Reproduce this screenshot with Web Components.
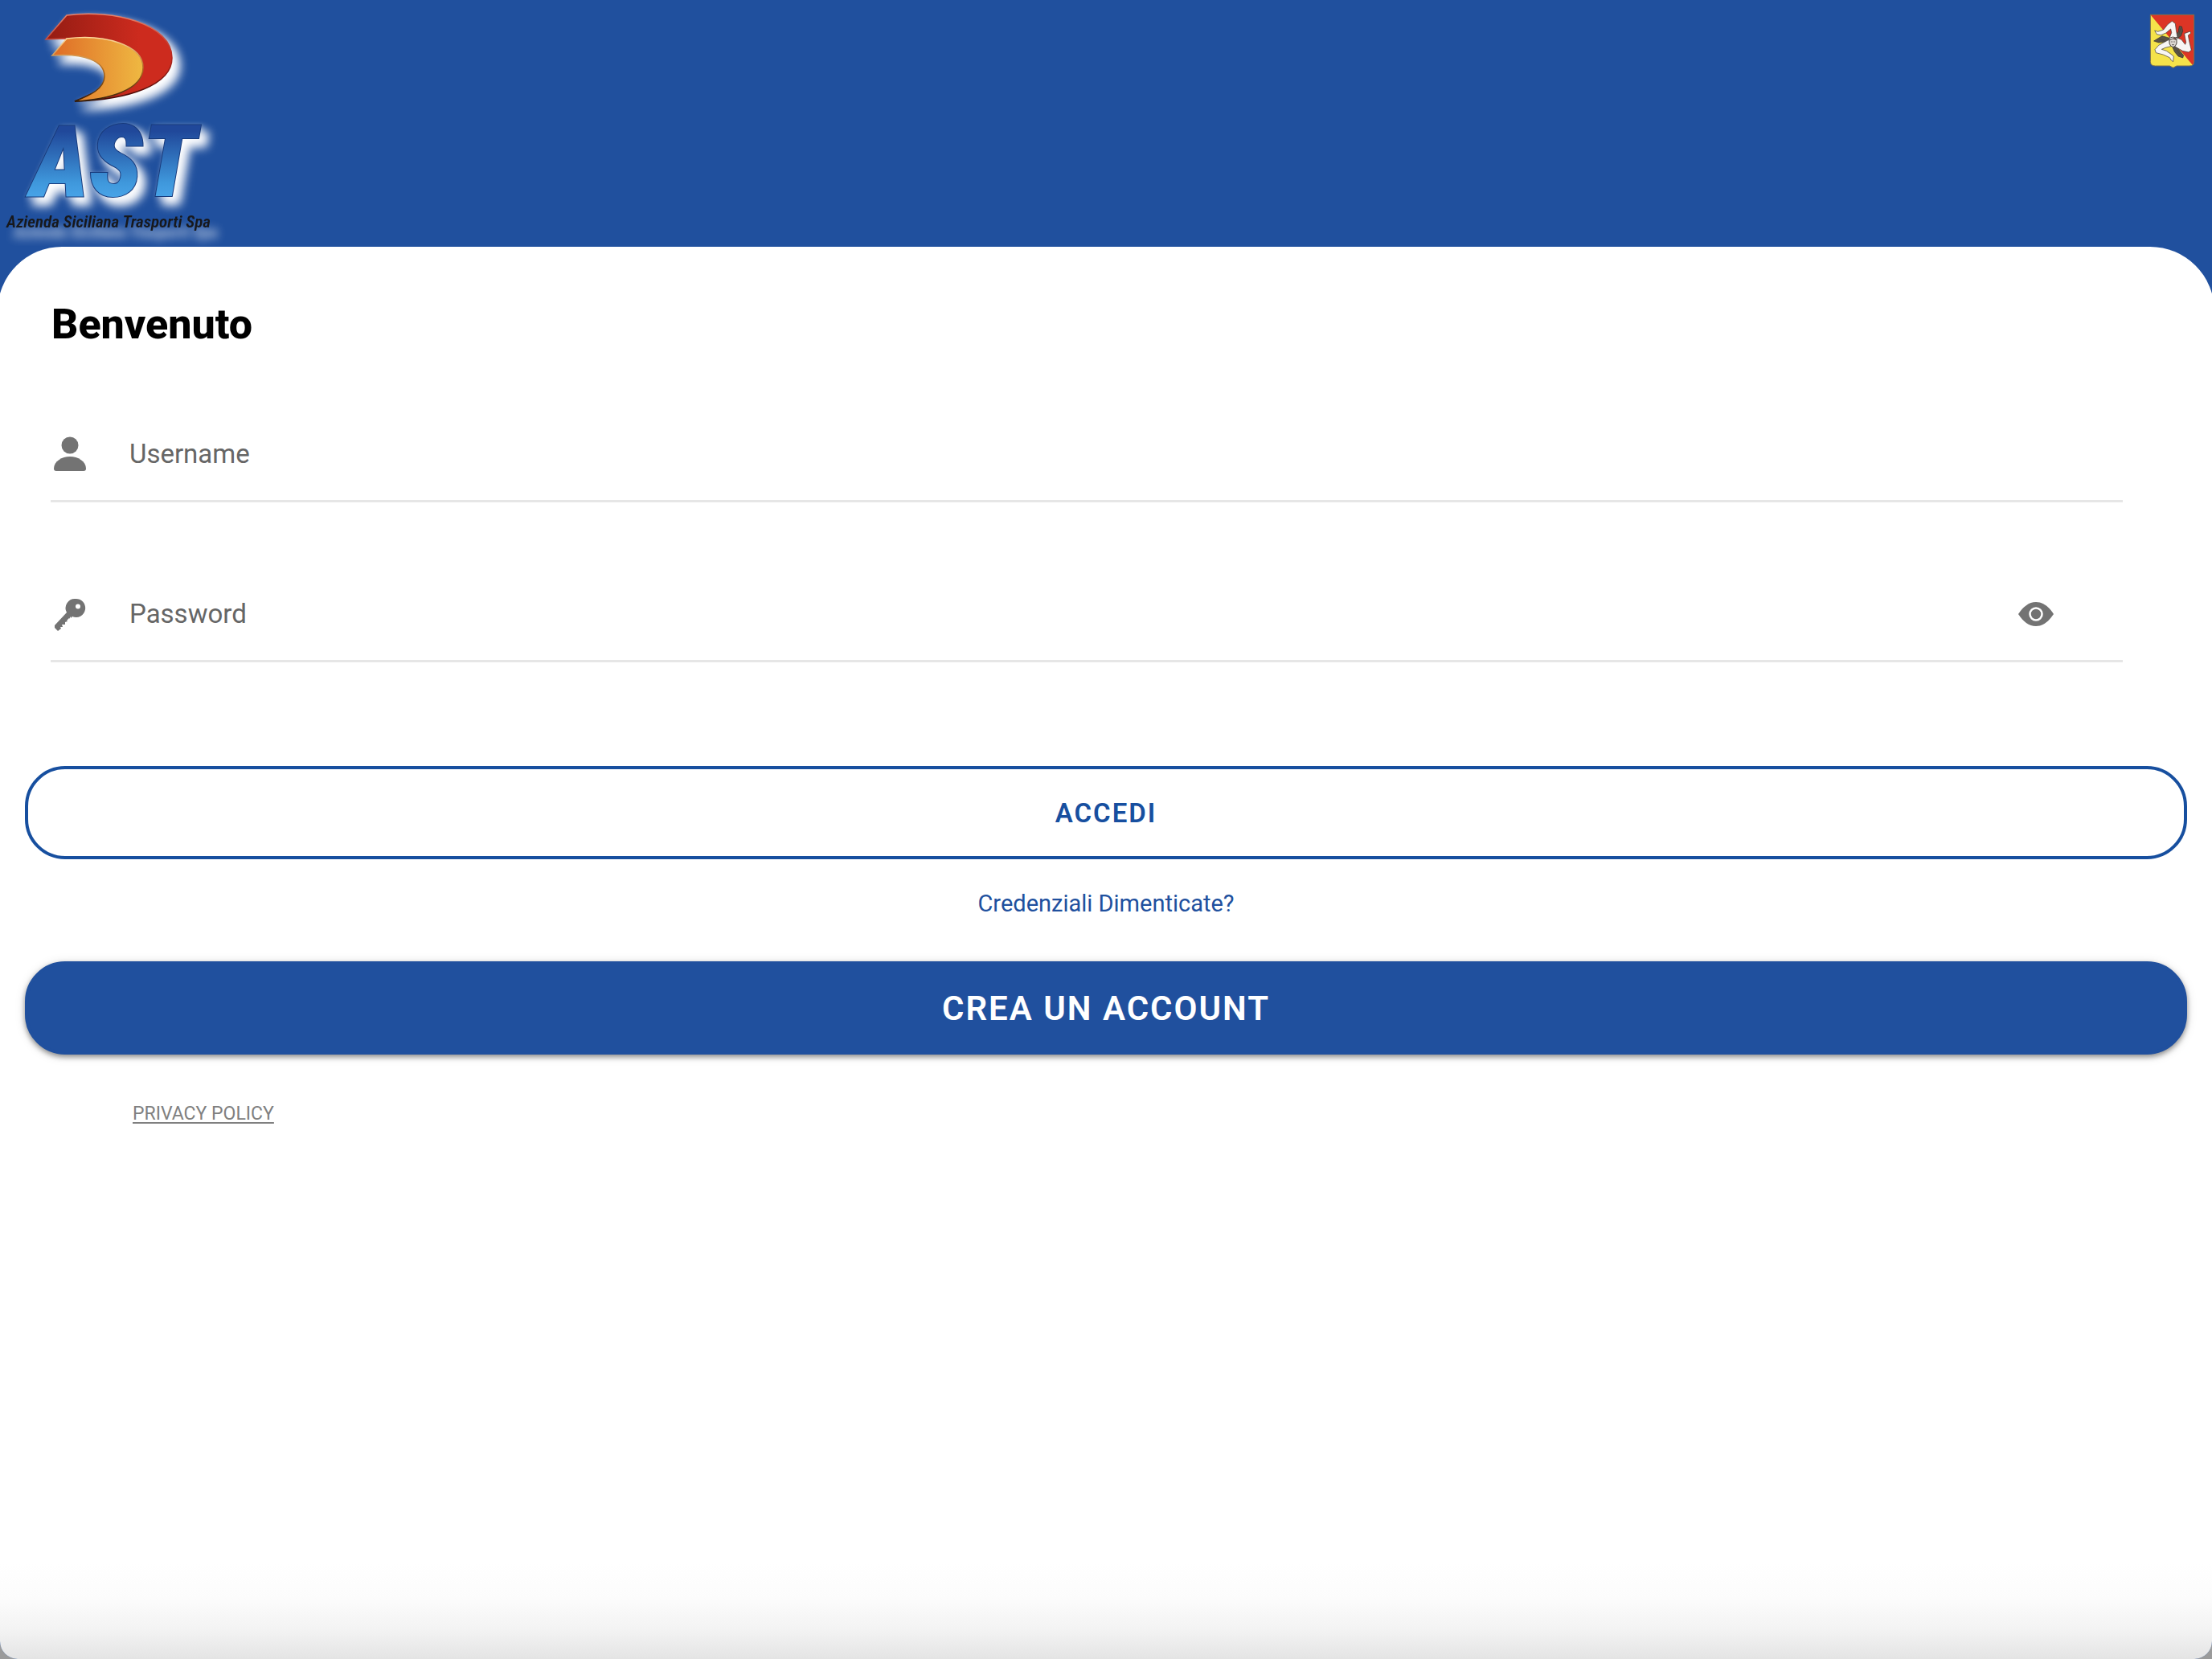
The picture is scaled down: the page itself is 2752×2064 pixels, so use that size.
<!DOCTYPE html>
<html lang="it">
<head>
<meta charset="utf-8">
<meta name="viewport" content="width=device-width, initial-scale=1">
<title>AST - Accesso</title>
<style>
  body {
    margin: 0;
    background: #9b9b9b;
    font-family: Roboto, "Liberation Sans", sans-serif;
  }
</style>
</head>
<body>
<login-page>
  <ast-logo slot="brand"></ast-logo>
  <sicily-crest slot="crest"></sicily-crest>
  <h1 slot="title">Benvenuto</h1>
  <login-field name="username" label="Username" icon="user"></login-field>
  <login-field name="password" label="Password" icon="key" type="password"></login-field>
  <pill-button slot="actions" variant="outline">ACCEDI</pill-button>
  <text-link slot="actions" href="#recupera">Credenziali Dimenticate?</text-link>
  <pill-button slot="actions" variant="solid">CREA UN ACCOUNT</pill-button>
  <text-link slot="footer" href="#privacy" variant="small">PRIVACY POLICY</text-link>
</login-page>

<script>
const ICONS = {
  user: `<svg viewBox="0 0 40 44" width="40" height="44"><circle cx="20" cy="11" r="10.5"/><path d="M0 40C0 31 10 25 20 25s20 6 20 15q0 3-3 3H3q-3 0-3-3z"/></svg>`,
  key: `<svg viewBox="0 0 40 44" width="40" height="44"><path fill-rule="evenodd" d="M27 3a11.500 11.500 0 1 1-4 22l-2 2v-2l-2 3v-1l-3 3 1 1-3 1 0 3-4 0 1 3-3 0 1 2-4 3-4-4v-3l15-16A11.500 11.500 0 0 1 27 3zm3 6.500a3 3 0 1 0 0 6 3 3 0 1 0 0-6z"/></svg>`,
  eye: `<svg viewBox="0 0 44 30" width="44" height="30"><path d="M0 15C6 6 13 0 22 0s16 6 22 15c-6 9-13 15-22 15S6 24 0 15z"/><circle cx="22" cy="15" r="7.500" fill="none" stroke="#fff" stroke-width="2.500"/></svg>`
};

class LoginPage extends HTMLElement {
  constructor() {
    super();
    this.attachShadow({ mode: "open" });
  }

  connectedCallback() {
    this.shadowRoot.innerHTML = `
      <style>
        :host {
          display: flex;
          flex-direction: column;
          min-height: 100vh;
          overflow: hidden;
          border-radius: 0 0 22px 22px;
          background: #20509e;
        }
        header {
          display: flex;
          justify-content: space-between;
          align-items: flex-start;
          height: 307px;
        }
        main {
          flex: 1;
          margin: 0 -3px;
          padding: 65px 34px 0;
          border-radius: 80px 80px 0 0;
          background: linear-gradient(to top, #e4e4e4 0, #f3f3f3 36px, #fcfcfc 76px, #fff 120px);
        }
        form {
          display: flex;
          flex-direction: column;
        }
        .fields {
          display: flex;
          flex-direction: column;
          gap: 82px;
          margin: 72px 80px 0 32px;
        }
        .actions {
          display: flex;
          flex-direction: column;
          align-items: stretch;
          gap: 31px;
          margin-top: 129px;
        }
        footer {
          padding: 50px 134px 0;
        }
        ::slotted(h1) {
          margin: 0 0 0 33px;
          font-size: 52px;
          font-weight: 800;
          line-height: 64px;
          color: #000;
        }
      </style>
      <header>
        <slot name="brand"></slot>
        <slot name="crest"></slot>
      </header>
      <main>
        <slot name="title"></slot>
        <form>
          <div class="fields"><slot></slot></div>
          <div class="actions"><slot name="actions"></slot></div>
        </form>
        <footer><slot name="footer"></slot></footer>
      </main>
    `;
  }
}

class LoginField extends HTMLElement {
  constructor() {
    super();
    this.attachShadow({ mode: "open" });
  }

  connectedCallback() {
    const name = this.getAttribute("name");
    const label = this.getAttribute("label");
    const type = this.getAttribute("type") || "text";
    const isPassword = type === "password";

    this.shadowRoot.innerHTML = `
      <style>
        :host { display: block; }
        .row {
          display: flex;
          align-items: center;
          height: 114px;
          padding-right: 86px;
          padding-left: 4px;
          border-bottom: 3px solid #e6e6e6;
        }
        svg { display: block; fill: #737373; }
        label { flex: none; }
        input {
          flex: 1;
          min-width: 0;
          margin: 0;
          padding: 0 0 0 54px;
          border: 0;
          outline: 0;
          background: none;
          font: 400 33px/48px Roboto, "Liberation Sans", sans-serif;
          color: #222;
        }
        input::placeholder { color: #666; opacity: 1; }
        button {
          flex: none;
          padding: 0;
          border: 0;
          background: none;
          cursor: pointer;
        }
      </style>
      <div class="row">
        <label for="${name}" aria-label="${label}">${ICONS[this.getAttribute("icon")]}</label>
        <input id="${name}" name="${name}" type="${type}" placeholder="${label}">
        ${isPassword ? `<button type="button" aria-label="Mostra password">${ICONS.eye}</button>` : ""}
      </div>
    `;

    if (isPassword) {
      const input = this.shadowRoot.querySelector("input");
      this.shadowRoot.querySelector("button").addEventListener("click", () => {
        input.type = input.type === "password" ? "text" : "password";
      });
    }
  }
}

class PillButton extends HTMLElement {
  constructor() {
    super();
    this.attachShadow({ mode: "open" });
  }

  connectedCallback() {
    const variant = this.getAttribute("variant") || "solid";
    this.shadowRoot.innerHTML = `
      <style>
        :host { display: block; }
        button {
          display: block;
          box-sizing: border-box;
          width: 100%;
          height: 116px;
          padding: 0;
          border: 4px solid #174f9f;
          border-radius: 50px;
          font-family: inherit;
          font-weight: 600;
          letter-spacing: 2px;
          cursor: pointer;
        }
        .outline {
          background: #fff;
          color: #174f9f;
          font-size: 33px;
        }
        .solid {
          border-color: #20509e;
          background: #20509e;
          color: #fff;
          font-size: 42px;
          box-shadow: 0 3px 6px rgba(0, 0, 0, 0.4), 0 2px 14px rgba(0, 0, 0, 0.12);
        }
      </style>
      <button type="button" class="${variant}"><slot></slot></button>
    `;
  }
}

class TextLink extends HTMLElement {
  constructor() {
    super();
    this.attachShadow({ mode: "open" });
  }

  connectedCallback() {
    const variant = this.getAttribute("variant") || "plain";
    this.shadowRoot.innerHTML = `
      <style>
        :host {
          display: block;
          padding-bottom: 12px;
          line-height: 48px;
          text-align: center;
        }
        :host([variant="small"]) { text-align: left; }
        a {
          font-size: 29px;
          color: #20509e;
          text-decoration: none;
        }
        .small {
          font-size: 23px;
          color: #808080;
          text-decoration: underline;
          text-decoration-thickness: 2px;
          text-underline-offset: 3px;
        }
      </style>
      <a class="${variant}" href="${this.getAttribute("href")}"><slot></slot></a>
    `;
  }
}

class AstLogo extends HTMLElement {
  constructor() {
    super();
    this.attachShadow({ mode: "open" });
  }

  connectedCallback() {
    this.shadowRoot.innerHTML = `
      <style>
        :host { display: block; }
        svg { display: block; }
        text { font-family: "Roboto Condensed", Roboto, "Liberation Sans", sans-serif; font-style: italic; font-weight: 600; }
        .name { font-weight: 900; paint-order: stroke; }
        .glow { filter: drop-shadow(8px 9px 6px #fff) drop-shadow(2px 2px 3px rgba(255, 255, 255, 0.4)); }
        .haze { filter: drop-shadow(9px 13px 6px rgba(255, 255, 255, 0.75)); }
      </style>
      <svg width="320" height="306" viewBox="0 0 320 306" role="img" aria-label="AST">
        <defs>
          <linearGradient id="red"><stop stop-color="#941c13"/><stop offset=".75" stop-color="#cd2b1e"/></linearGradient>
          <linearGradient id="gold"><stop stop-color="#df6b26"/><stop offset="1" stop-color="#efb942"/></linearGradient>
          <linearGradient id="sky" gradientUnits="userSpaceOnUse" x1="0" y1="154" x2="0" y2="246"><stop offset=".1" stop-color="#20489a"/><stop offset=".8" stop-color="#3f98dc"/><stop offset="1" stop-color="#48a4e8"/></linearGradient>
          <linearGradient id="rim" x1="0" y1="0" x2="0" y2="1"><stop stop-color="#e8846c"/><stop offset=".5" stop-color="#b3231b"/><stop offset="1" stop-color="#3c0906"/></linearGradient>
          <linearGradient id="goldrim" x1="0" y1="0" x2="0" y2="1"><stop stop-color="#ffdc9d"/><stop offset=".5" stop-color="#b06a20"/><stop offset="1" stop-color="#33200a"/></linearGradient>
        </defs>
        <g class="glow">
          <path fill="url(#red)" stroke="url(#rim)" stroke-width="1.500" d="M57 49L83 19C142 11 214 30 214 72C214 106 160 124 93 126C130 110 160 95 150 75C138 58 110 48 82 48Z"/>
          <path fill="url(#gold)" stroke="url(#goldrim)" stroke-width="1.500" d="M65 69L83 48C130 42 178 56 178 84C178 112 135 124 93 126C112 119 130 110 130 95C130 76 106 66 65 69Z"/>
        </g>
        <g class="glow">
          <text class="name" x="38" y="244" font-size="124" fill="url(#sky)" stroke="#173a7c" stroke-width="2">AST</text>
        </g>
        <g class="haze">
          <text x="8" y="283" font-size="21" fill="#17181c">Azienda Siciliana Trasporti Spa</text>
        </g>
      </svg>
    `;
  }
}

class SicilyCrest extends HTMLElement {
  constructor() {
    super();
    this.attachShadow({ mode: "open" });
  }

  connectedCallback() {
    this.shadowRoot.innerHTML = `
      <style>
        :host { display: block; padding: 17px 21px 0 0; }
        svg { display: block; }
      </style>
      <svg width="57" height="68" viewBox="102 51 171 204" role="img" aria-label="Regione Siciliana">
        <path fill="#f5e34a" d="M106 55H269V230Q269 246 252 246H204L191 253L178 246H124Q106 246 106 230Z"/>
        <path fill="#dc3525" d="M106 55H269V230Q269 239 263 242Z"/>
        <path fill="none" stroke="#776c50" stroke-width="3" d="M106 55H269V230Q269 246 252 246H204L191 253L178 246H124Q106 246 106 230Z"/>
        <g fill="#595247" stroke="#302c29" stroke-width="2">
          <path d="M180 143L150 134L135 143L119 153L137 159L162 156L180 158Z"/>
          <path d="M196 136L210 119L214 98L223 99L227 116L220 134L202 148Z"/>
          <path d="M188 174L196 193L210 210L227 216L230 207L216 190L201 170Z"/>
        </g>
        <g fill="#f8f6f4" stroke="#3b3430" stroke-width="2" stroke-linejoin="round">
          <path d="M174 150L185 122L182 108L164 123L145 131L130 128L122 114L134 118L155 111L171 91L187 79L199 88L202 112L207 139Z"/>
          <path d="M201 139L222 148L236 166L239 158L235 138L233 125L255 117L257 124L247 132L252 158L259 187L249 195L226 190L193 171Z"/>
          <path d="M186 172L162 178L148 184L166 190L183 202L193 210L191 230L184 225L178 215L154 204L127 197L123 185L137 169L175 148Z"/>
        </g>
        <path fill="#ddd8d3" stroke="#47413b" stroke-width="3" d="M177 149Q190 140 204 149L204 162Q200 176 190 176Q180 173 177 162Z"/>
        <path fill="none" stroke="#4c4640" stroke-width="3" d="M174 146Q190 130 207 147M184 156h4M193 156h4M187 167h7M139 146l21 6M218 106l-5 22M204 185l13 19"/>
      </svg>
    `;
  }
}

customElements.define("login-page", LoginPage);
customElements.define("login-field", LoginField);
customElements.define("pill-button", PillButton);
customElements.define("text-link", TextLink);
customElements.define("ast-logo", AstLogo);
customElements.define("sicily-crest", SicilyCrest);
</script>
</body>
</html>
